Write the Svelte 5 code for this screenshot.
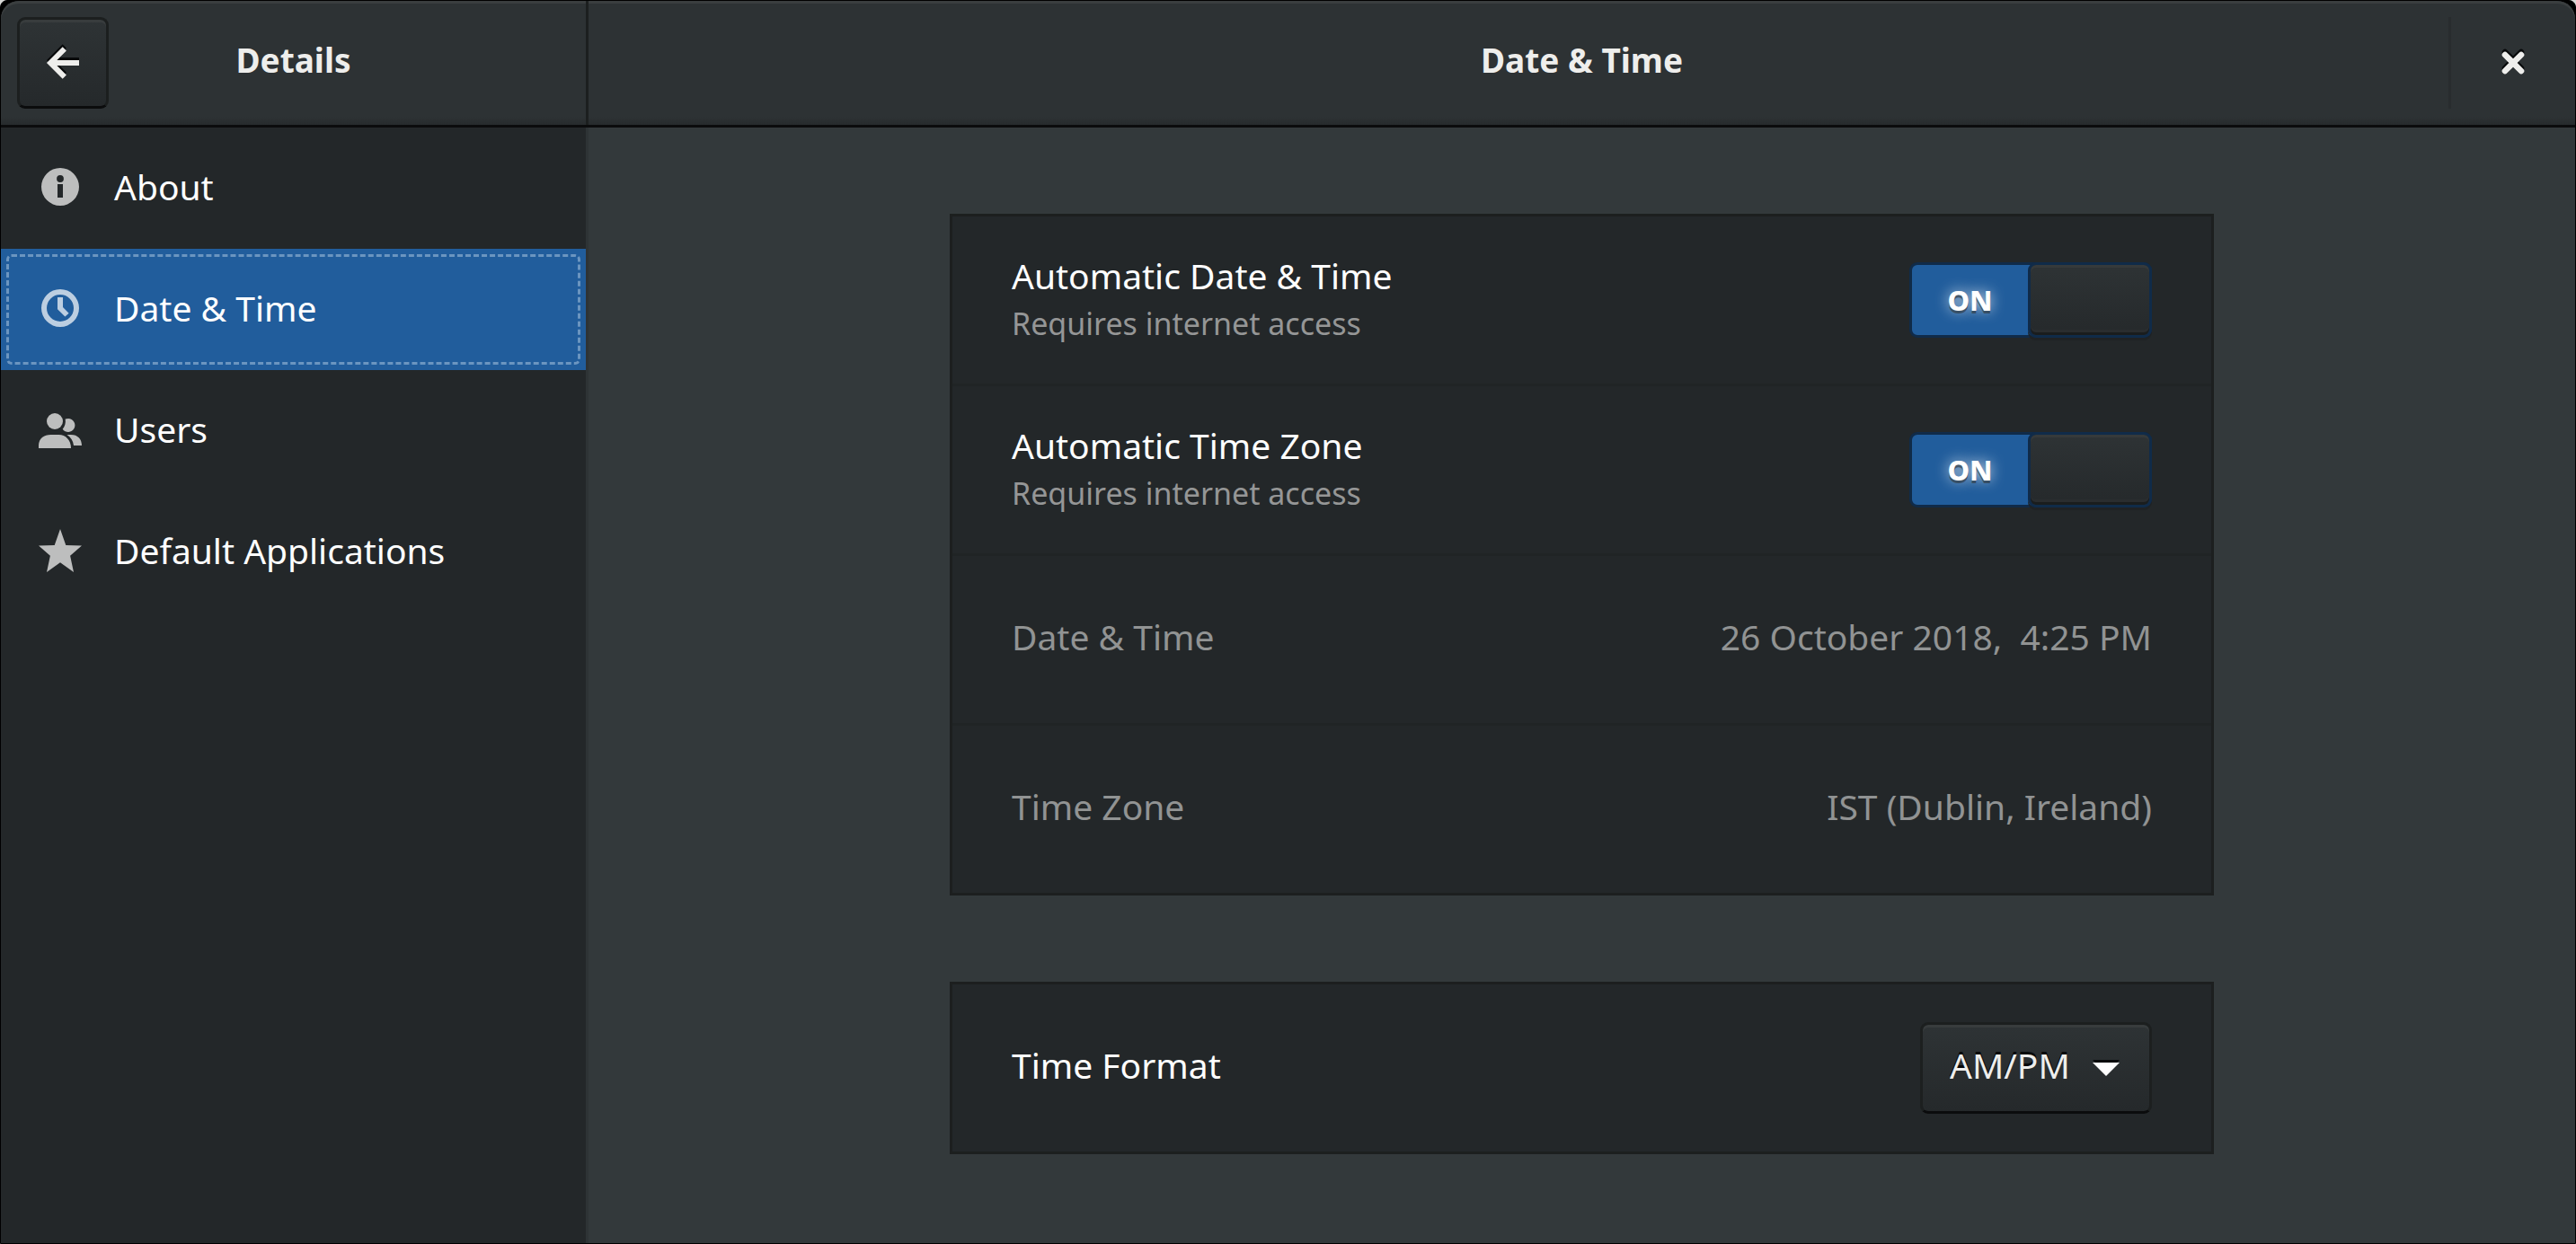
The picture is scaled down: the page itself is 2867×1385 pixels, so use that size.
<script lang="ts">
  type Icon = 'info' | 'clock' | 'users' | 'star';

  const pages: { id: string; label: string; icon: Icon }[] = [
    { id: 'about', label: 'About', icon: 'info' },
    { id: 'datetime', label: 'Date & Time', icon: 'clock' },
    { id: 'users', label: 'Users', icon: 'users' },
    { id: 'apps', label: 'Default Applications', icon: 'star' }
  ];

  let current = $state('datetime');
  let autoTime = $state(true);
  let autoZone = $state(true);
  let format = $state('12h');
</script>

{#snippet toggle(id: string, on: boolean, change: (v: boolean) => void)}
  <span class="switch" class:on>
    <input {id} type="checkbox" role="switch" checked={on} onchange={(e) => change(e.currentTarget.checked)} />
    <span class="state">{on ? 'ON' : ''}</span>
    <span class="knob"></span>
  </span>
{/snippet}

<div class="window">
  <header class="bar">
    <div class="bar-side">
      <button class="raised back" aria-label="Back">
        <svg class="icon etched" viewBox="0 0 16 16" aria-hidden="true">
          <path d="M8.600 2.800 3.400 8l5.200 5.200M4 8h10" fill="none" stroke="currentColor" stroke-width="2" />
        </svg>
      </button>
      <h2>Details</h2>
    </div>
    <div class="bar-main">
      <h1>Date &amp; Time</h1>
      <div class="controls">
        <button class="close" aria-label="Close">
          <svg class="icon etched" viewBox="0 0 16 16" aria-hidden="true">
            <path d="M5 5l6 6M11 5l-6 6" stroke="currentColor" stroke-width="2.2" stroke-linecap="round" />
          </svg>
        </button>
      </div>
    </div>
  </header>

  <div class="body">
    <nav class="sidebar" aria-label="Details">
      {#each pages as page (page.id)}
        <button class="page" class:selected={current === page.id} onclick={() => (current = page.id)}>
          <svg class="icon" viewBox="0 0 16 16" fill="currentColor" aria-hidden="true">
            {#if page.icon === 'info'}
              <path fill-rule="evenodd" d="M8 1a7 7 0 1 0 0 14A7 7 0 0 0 8 1zm0 2.7a1.3 1.3 0 1 1 0 2.6 1.3 1.3 0 0 1 0-2.6zM7 7h2v5H7z" />
            {:else if page.icon === 'clock'}
              <path fill-rule="evenodd" d="M8 1a7 7 0 1 0 0 14A7 7 0 0 0 8 1zm0 2a5 5 0 1 1 0 10A5 5 0 0 1 8 3z" />
              <path d="M7 4h2v3.7l2.2 2.2-1.4 1.3L7 8.4z" />
            {:else if page.icon === 'users'}
              <circle cx="6" cy="5" r="3" />
              <path d="M0 15v-1c0-2.600 2-4 4.500-4h3c2.500 0 4.500 2 4.500 5z" />
              <path d="M9.900 4.200c.4-.15.7-.2 1.100-.2a2.500 2.500 0 1 1-2.100 3.900C9.800 7 10.100 5.600 9.900 4.200z" />
              <path d="M10.500 10H12c2.500 0 4 1.600 4 4h-3c-.2-1.700-1.100-3.100-2.500-4z" />
            {:else}
              <path d="M8 0l2.100 6L16 6.200l-4.300 3.700L13 16l-5-3.600L3 16l1.300-6.100L0 6.200 5.900 6z" />
            {/if}
          </svg>
          <span>{page.label}</span>
        </button>
      {/each}
    </nav>

    <main>
      <section class="card">
        <div class="row">
          <label for="auto-time">
            <span class="title">Automatic Date &amp; Time</span>
            <small>Requires internet access</small>
          </label>
          {@render toggle('auto-time', autoTime, (v) => (autoTime = v))}
        </div>
        <div class="row">
          <label for="auto-zone">
            <span class="title">Automatic Time Zone</span>
            <small>Requires internet access</small>
          </label>
          {@render toggle('auto-zone', autoZone, (v) => (autoZone = v))}
        </div>
        <button class="row single" disabled={autoTime}>
          <span>Date &amp; Time</span>
          <span class="value">26 October 2018,&nbsp; 4:25 PM</span>
        </button>
        <button class="row single" disabled={autoZone}>
          <span>Time Zone</span>
          <span class="value">IST (Dublin, Ireland)</span>
        </button>
      </section>

      <section class="card">
        <div class="row">
          <label class="lone" for="format">Time Format</label>
          <span class="combo">
            <select id="format" class="raised" bind:value={format}>
              <option value="24h">24-hour</option>
              <option value="12h">AM/PM</option>
            </select>
            <svg class="icon etched" viewBox="0 0 16 16" fill="currentColor" aria-hidden="true">
              <path d="M3 6h10l-5 5z" />
            </svg>
          </span>
        </div>
      </section>
    </main>
  </div>
</div>

<style>
  :global(body) {
    margin: 0;
    background: #d8d8d6;
  }

  .window {
    --text: #eeeeec;
    --base: #232729;
    --edge: #1c1f1f;
    --accent: #215d9c;
    box-sizing: border-box;
    min-height: 100vh;
    display: flex;
    flex-direction: column;
    border: 1px solid #000;
    border-radius: 8px 8px 0 0;
    background: #000;
    color: #fff;
    font: 39px/52px 'Noto Sans', sans-serif;
  }

  .window *,
  .window *::before {
    box-sizing: border-box;
  }

  button,
  select {
    margin: 0;
    padding: 0;
    border: 0;
    background: none;
    color: inherit;
    font: inherit;
    text-align: left;
  }

  .icon {
    flex: none;
    width: 48px;
    height: 48px;
  }

  .etched {
    filter: drop-shadow(0 -3px 0 #07090a);
  }

  .bar {
    display: flex;
    height: 141px;
    border-bottom: 3px solid #0b0c0d;
    border-radius: 20px 20px 0 0;
    background: linear-gradient(to top, #272b2d, #2d3234 9px);
    box-shadow: inset 0 3px #3a3e3f;
    color: var(--text);
  }

  .bar-side {
    display: grid;
    grid-template-columns: 102px 1fr 102px;
    align-items: center;
    width: 654px;
    padding: 0 18px;
    border-right: 3px solid var(--edge);
  }

  .bar-main {
    flex: 1;
    display: grid;
    grid-template-columns: 123px 1fr 123px;
    align-items: center;
    padding: 0 18px;
  }

  .bar-main h1 {
    grid-column: 2;
  }

  h1,
  h2 {
    margin: 0;
    padding-bottom: 6px;
    font-size: 37px;
    font-weight: 700;
    text-align: center;
  }

  .raised {
    height: 102px;
    border: 3px solid var(--edge);
    border-bottom-color: #0b0c0d;
    border-radius: 9px;
    background: linear-gradient(#2e3335, #25292b);
    box-shadow: inset 0 3px #383c3d;
    color: var(--text);
  }

  .back,
  .close {
    display: grid;
    place-items: center;
    width: 102px;
    height: 102px;
  }

  .controls {
    display: flex;
    justify-content: flex-end;
    border-left: 3px solid #282c2e;
  }

  .body {
    flex: 1;
    display: flex;
  }

  .sidebar {
    width: 654px;
    border-right: 3px solid #2e3335;
    background: var(--base);
  }

  .page {
    position: relative;
    display: flex;
    align-items: center;
    gap: 36px;
    width: 100%;
    height: 135px;
    padding: 0 42px 3px;
  }

  .page .icon {
    color: #bdbebe;
  }

  .page.selected {
    background: var(--accent);
  }

  .page.selected .icon {
    color: #bccee1;
  }

  .page.selected::before {
    content: '';
    position: absolute;
    inset: 6px;
    border: 3px dashed #6b95c0;
    border-radius: 6px;
  }

  main {
    flex: 1;
    display: flex;
    flex-direction: column;
    align-items: center;
    gap: 96px;
    padding: 96px 48px;
    background: #33393b;
  }

  .card {
    width: 100%;
    max-width: 1407px;
    border: 3px solid var(--edge);
    background: var(--base);
  }

  .row {
    display: flex;
    align-items: center;
    justify-content: space-between;
    width: 100%;
    height: 186px;
    padding: 0 66px;
  }

  .row + .row {
    height: 189px;
    border-top: 3px solid #202425;
  }

  .single,
  .lone {
    padding-bottom: 6px;
  }

  .single:disabled {
    color: #919393;
  }

  .title,
  small {
    display: block;
  }

  small {
    color: #959696;
    font-size: 34px;
    line-height: 54px;
  }

  .switch {
    position: relative;
    display: grid;
    grid-template-columns: 129px 135px;
    width: 270px;
    height: 84px;
    border: 3px solid var(--edge);
    border-radius: 9px;
    background: #1b1e1f;
  }

  .switch.on {
    border-color: #102b49;
    background: var(--accent);
  }

  .switch input {
    position: absolute;
    inset: 0;
    width: 100%;
    height: 100%;
    margin: 0;
    opacity: 0;
  }

  .state {
    align-self: center;
    font-size: 31px;
    line-height: 42px;
    font-weight: 800;
    text-align: center;
    text-shadow: 0 3px rgb(46 52 54 / 60%), 0 0 15px rgb(255 255 255 / 80%);
  }

  .knob {
    order: -1;
    margin: -3px 0 -3px -3px;
    border: 3px solid var(--edge);
    border-radius: 9px;
    background: linear-gradient(#2e3335, #25292b);
    box-shadow: inset 0 3px #363a3b, inset 0 -3px #1a1d1e, inset 0 -6px #2a2d2f, 0 3px #1f2224;
    pointer-events: none;
  }

  .on .knob {
    order: 0;
    margin: -3px -3px -3px 0;
    border-color: #102b49;
  }

  .combo {
    position: relative;
    display: flex;
    align-items: center;
  }

  .combo select {
    appearance: none;
    width: 258px;
    padding: 0 90px 6px 30px;
    text-shadow: 0 -3px #07090a;
  }

  .combo .icon {
    position: absolute;
    right: 27px;
    pointer-events: none;
  }
</style>
